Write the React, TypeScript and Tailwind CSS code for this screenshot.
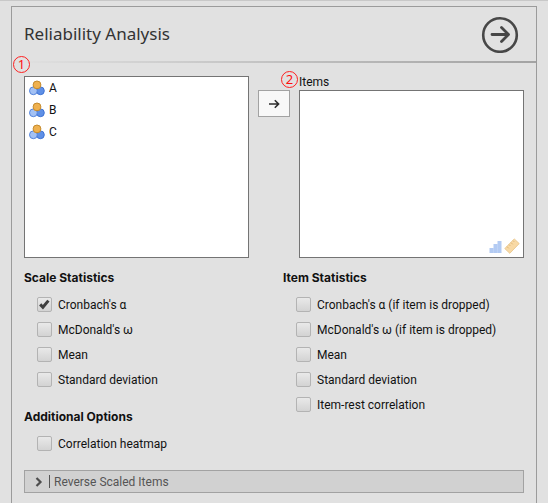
import { useState } from "react";

const variables = ["A", "B", "C"];

const scaleStatistics = ["Cronbach's α", "McDonald's ω", "Mean", "Standard deviation"];

const itemStatistics = [
  "Cronbach's α (if item is dropped)",
  "McDonald's ω (if item is dropped)",
  "Mean",
  "Standard deviation",
  "Item-rest correlation",
];

function NominalIcon() {
  return (
    <svg width="16" height="16" viewBox="0 0 16 16" aria-hidden="true">
      <circle cx="11.4" cy="10.8" r="3.9" fill="#5f90e6" stroke="#3f73d4" />
      <circle cx="4.4" cy="10.8" r="3.9" fill="#a3c1f4" stroke="#5585dc" />
      <circle cx="8" cy="4.9" r="3.9" fill="#efb14f" stroke="#c58a2c" />
    </svg>
  );
}

function OrdinalIcon() {
  return (
    <svg width="14" height="14" viewBox="0 0 14 14" aria-hidden="true">
      <path d="M0.5 8h4v5h-4z M4.5 4h4v9h-4z M8.5 1h4v12h-4z" fill="#b3cbf3" />
      <path d="M4.5 8v5 M8.5 4v9" stroke="#c7d9f7" strokeWidth="0.6" />
    </svg>
  );
}

function ContinuousIcon() {
  return (
    <svg width="16" height="16" viewBox="0 0 16 16" aria-hidden="true">
      <path d="M0.8 10.6L10.3 0.9L15.2 5.6L5.8 15.3z" fill="#f8d9a5" stroke="#e9c68c" strokeWidth="0.9" />
      <path d="M3 8.6l1.8 1.8 M5 6.6l1.3 1.3 M7 4.6l1.8 1.8 M9 2.6l1.3 1.3" stroke="#ddb472" strokeWidth="0.9" />
    </svg>
  );
}

function Marker({ children, className }: { children: string; className: string }) {
  return (
    <span
      className={`absolute flex size-[17px] items-center justify-center rounded-full border border-[#ff2020] font-['Noto_Sans',sans-serif] text-[13px] leading-none text-[#ff1010] ${className}`}
    >
      {children}
    </span>
  );
}

function Option({ label, initial = false }: { label: string; initial?: boolean }) {
  const [checked, setChecked] = useState(initial);
  return (
    <label className="flex h-[25px] items-center gap-[6px]">
      <span className="grid size-[15px] shrink-0">
        <input
          type="checkbox"
          checked={checked}
          onChange={(e) => setChecked(e.target.checked)}
          className="col-start-1 row-start-1 size-[15px] appearance-none rounded-xs border border-[#b3b3b3] bg-linear-to-b from-[#e9e9e9] to-[#d3d3d3]"
        />
        {checked && (
          <svg viewBox="0 0 15 15" className="pointer-events-none col-start-1 row-start-1 size-[15px]" aria-hidden="true">
            <path d="M3.2 7.4L5.9 10.2L11.4 3.6" fill="none" stroke="#3e3e3e" strokeWidth="3" />
          </svg>
        )}
      </span>
      {label}
    </label>
  );
}

function Group({ title, options, checked }: { title: string; options: string[]; checked?: string }) {
  return (
    <fieldset>
      <legend className="mb-[6px] h-4 font-['Inter',sans-serif] font-bold leading-4">{title}</legend>
      <div className="pl-[13px]">
        {options.map((o) => (
          <Option key={o} label={o} initial={o === checked} />
        ))}
      </div>
    </fieldset>
  );
}

export default function App() {
  return (
    <div className="min-h-screen border-t border-[#c8c8c8] bg-[#e1e1e1] px-[11px] pt-[5px] font-['Roboto','Liberation_Sans',sans-serif] text-xs leading-4 text-[#111]">
      <main className="border-x border-t border-[#9b9b9b]">
        <header className="flex h-[54px] items-center justify-between pr-[17px] pl-3">
          <h1 className="font-['Noto_Sans',sans-serif] text-[17px] leading-6 text-[#333]">Reliability Analysis</h1>
          <button type="button" aria-label="Close options">
            <svg width="38" height="38" viewBox="0 0 38 38" fill="none" stroke="#474747" strokeLinecap="round" strokeLinejoin="round" aria-hidden="true">
              <circle cx="19" cy="20" r="16.8" strokeWidth="2.6" />
              <path d="M11 19.5H27 M20.5 12.5L27.5 19.5L20.5 26.5" strokeWidth="2.8" />
            </svg>
          </button>
        </header>
        <div className="h-[2px] bg-linear-to-r from-[#e1e1e1] to-[#a3a3a3]" />

        <div className="px-3 pt-[13px] pb-[10px]">
          <section className="grid grid-cols-[1fr_32px_1fr] gap-[9px]">
            <div className="relative">
              <Marker className="-top-5 -left-[11px]">1</Marker>
              <ul className="h-[182px] border border-[#747474] bg-white px-1">
                {variables.map((v) => (
                  <li key={v} className="flex h-[22px] items-center gap-1">
                    <NominalIcon />
                    {v}
                  </li>
                ))}
              </ul>
            </div>
            <button
              type="button"
              aria-label="Move to Items"
              className="mt-[14px] flex h-[27px] items-center justify-center border border-[#a2a2a2] bg-[#f8f8f8]"
            >
              <svg width="12" height="10" viewBox="0 0 12 10" fill="none" stroke="#2c2c2c" strokeWidth="1.6" aria-hidden="true">
                <path d="M1 5H10.5 M6.8 1.2L10.6 5L6.8 8.8" />
              </svg>
            </button>
            <div className="relative flex flex-col">
              <Marker className="-top-[5px] -left-[18px]">2</Marker>
              <h2 className="-mt-[2px] h-4">Items</h2>
              <div className="flex flex-1 items-end justify-end gap-px border border-[#747474] bg-white p-[3px]">
                <OrdinalIcon />
                <ContinuousIcon />
              </div>
            </div>
          </section>

          <section className="mt-3 grid grid-cols-2 gap-[18px]">
            <div className="flex flex-col gap-[17px]">
              <Group title="Scale Statistics" options={scaleStatistics} checked="Cronbach's α" />
              <Group title="Additional Options" options={["Correlation heatmap"]} />
            </div>
            <Group title="Item Statistics" options={itemStatistics} />
          </section>

          <button
            type="button"
            aria-expanded="false"
            className="mt-[14px] flex h-[23px] w-full items-center border border-[#a2a2a2] bg-[#d1d1d1] pl-[10px] text-[#555]"
          >
            <svg width="8" height="10" viewBox="0 0 8 10" fill="none" stroke="#4d4d4d" strokeWidth="2.2" aria-hidden="true">
              <path d="M1.5 1L5.5 5L1.5 9" />
            </svg>
            <span className="ml-[6px] h-[13px] w-px bg-[#555]" />
            <span className="ml-1">Reverse Scaled Items</span>
          </button>
        </div>
      </main>
    </div>
  );
}
